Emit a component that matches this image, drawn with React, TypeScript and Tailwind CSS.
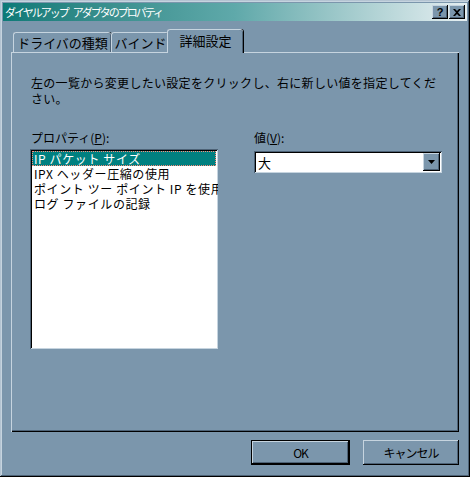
import React from 'react';

const font = { fontFamily: '"Noto Sans CJK JP", "Noto Sans", sans-serif' };

// raised 3D edge used by buttons and title buttons
const raised =
  'shadow-[inset_-1px_-1px_0_#000,inset_1px_1px_0_#c6d4df,inset_-2px_-2px_0_#4d6276]';
const sunken =
  'shadow-[inset_1px_1px_0_#4d6276,inset_-1px_-1px_0_#c6d4df,inset_2px_2px_0_#000]';

function TitleButton({ children }: { children: React.ReactNode }) {
  return (
    <div className={`w-[16px] h-[14px] bg-[#7b96ac] ${raised} flex items-center justify-center`}>
      {children}
    </div>
  );
}

function Tab({ label, width, active }: { label: string; width: string; active?: boolean }) {
  return (
    <div
      className={`${width} ${
        active
          ? 'h-[24px] -mx-[2px] z-10 -mb-[1px] bg-[#7b96ac]'
          : 'h-[20px] bg-[#7b96ac]'
      } relative rounded-t-[3px] border-l border-t border-[#c6d4df] shadow-[inset_-1px_0_0_#4d6276,1px_0_0_#000] flex items-center justify-center text-[13px] text-black`}
    >
      <span className={active ? 'pb-[2px]' : 'pt-[1px]'}>{label}</span>
    </div>
  );
}

function PushButton({ label, isDefault }: { label: string; isDefault?: boolean }) {
  return (
    <div
      className={`${isDefault ? 'w-[99px] border border-black' : 'w-[96px]'} h-[25px] bg-[#7b96ac] ${raised} flex items-center justify-center text-[12px] text-black tracking-[-1px]`}
    >
      {label}
    </div>
  );
}

const items = [
  'IP パケット サイズ',
  'IPX ヘッダー圧縮の使用',
  'ポイント ツー ポイント IP を使用',
  'ログ ファイルの記録',
];

export default function App() {
  return (
    <div
      className="w-[470px] h-[477px] bg-[#7b96ac] p-[3px] flex flex-col shadow-[inset_-1px_-1px_0_#000,inset_1px_1px_0_#b4c4d2,inset_-2px_-2px_0_#4d6276,inset_2px_2px_0_#c6d4df] select-none"
      style={font}
    >
      {/* Title bar */}
      <div className="h-[18px] bg-gradient-to-r from-[#0b7a77] via-[#5fa9aa] to-[#e6eff2] flex items-center pl-[2px] pr-[2px]">
        <span className="text-white text-[11px] tracking-[-2px] leading-none flex-1 pt-[1px] whitespace-nowrap">
          <span className="mr-[5px]">ダイヤルアップ</span>アダプタのプロパティ
        </span>
        <div className="flex gap-[1px]">
          <TitleButton>
            <span className="text-[11px] font-bold leading-none text-black" style={{ fontFamily: '"Liberation Sans", sans-serif' }}>?</span>
          </TitleButton>
          <TitleButton>
            <svg width="8" height="7" viewBox="0 0 8 7">
              <path d="M0 0h2l2 2 2-2h2L5 3.5 8 7H6L4 5 2 7H0l3-3.5z" fill="#000" />
            </svg>
          </TitleButton>
        </div>
      </div>

      {/* Body */}
      <div className="flex-1 flex flex-col px-[8px] pt-[9px]">
        {/* Tabs */}
        <div className="flex items-end pl-[2px] h-[22px]">
          <Tab label="ドライバの種類" width="w-[98px]" />
          <Tab label="バインド" width="w-[58px]" />
          <Tab label="詳細設定" width="w-[76px]" active />
        </div>

        {/* Panel */}
        <div className="w-[448px] h-[380px] border-l border-t border-[#c6d4df] shadow-[inset_-1px_-1px_0_#000,inset_-2px_-2px_0_#4d6276] pl-[18px] pt-[22px] text-[12px] text-black">
          <p className="leading-[16px] tracking-[0.3px] pl-[1px]">
            左の一覧から変更したい設定をクリックし、右に新しい値を指定してくだ
            <br />
            さい。
          </p>

          <div className="flex gap-[36px] mt-[23px]">
            {/* Property list */}
            <div className="w-[188px]">
              <div className="leading-[16px] pl-[1px] mb-[3px]">
                プロパティ(<span className="underline">P</span>):
              </div>
              <div className={`h-[200px] bg-white p-[2px] ${sunken} overflow-hidden`}>
                {items.map((item, i) => (
                  <div
                    key={item}
                    className={`h-[15px] leading-[15px] pl-[2px] whitespace-nowrap tracking-[0.6px] ${
                      i === 0
                        ? 'bg-[#008080] text-white outline outline-1 outline-dotted outline-[#ff8a7a] -outline-offset-1'
                        : ''
                    }`}
                  >
                    {item}
                  </div>
                ))}
              </div>
            </div>

            {/* Value */}
            <div className="w-[188px]">
              <div className="leading-[16px] mb-[5px]">
                値(<span className="underline">V</span>):
              </div>
              <div className={`h-[22px] bg-white p-[2px] ${sunken} flex items-center`}>
                <span className="flex-1 pl-[2px] text-[13px] leading-none">大</span>
                <div className={`w-[17px] h-[18px] bg-[#7b96ac] ${raised} flex items-center justify-center`}>
                  <svg width="7" height="4" viewBox="0 0 7 4">
                    <path d="M0 0h7L3.5 4z" fill="#000" />
                  </svg>
                </div>
              </div>
            </div>
          </div>
        </div>

        {/* Buttons */}
        <div className="flex justify-end gap-[13px] pt-[8px] w-[448px]">
          <PushButton label="OK" isDefault />
          <PushButton label="キャンセル" />
        </div>
      </div>
    </div>
  );
}
